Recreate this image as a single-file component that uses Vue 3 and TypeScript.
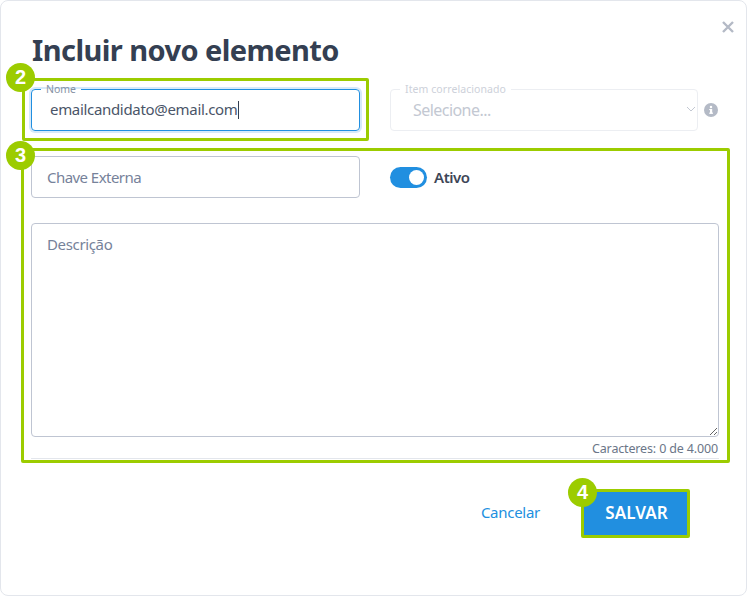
<script setup lang="ts">
const badges: { n: number; cls: string }[] = [
  { n: 2, cls: 'b2' },
  { n: 3, cls: 'b3' },
  { n: 4, cls: 'b4' },
]
const hl: string[] = ['h2', 'h3', 'h4']
</script>

<template>
  <div class="page">
    <div class="modal">
      <button class="close" aria-label="Fechar">
        <svg width="12" height="12" viewBox="0 0 12 12"><path d="M1 1l10 10M11 1L1 11" stroke="#b4bac6" stroke-width="2.4" fill="none" /></svg>
      </button>
      <h1 class="title">Incluir novo elemento</h1>

      <div class="row row1">
        <fieldset class="field focus">
          <legend>Nome</legend>
          <span class="value">emailcandidato@email.com</span><span class="caret"></span>
        </fieldset>
        <div class="selwrap">
          <fieldset class="field disabled">
            <legend>Item correlacionado</legend>
            <span class="value">Selecione...</span>
            <svg class="chev" width="10" height="6" viewBox="0 0 10 6"><path d="M1 1l4 4 4-4" stroke="#c3c8d2" stroke-width="1" fill="none" /></svg>
          </fieldset>
          <svg class="info" width="14" height="14" viewBox="0 0 14 14">
            <circle cx="7" cy="7" r="7" fill="#b4bac6" />
            <rect x="6" y="6" width="2.2" height="4.6" fill="#fff" />
            <rect x="5.2" y="9.6" width="3.8" height="1.2" fill="#fff" />
            <rect x="5.2" y="6" width="2" height="1.1" fill="#fff" />
            <circle cx="7" cy="4" r="1.25" fill="#fff" />
          </svg>
        </div>
      </div>

      <div class="row row2">
        <input class="plain" type="text" placeholder="Chave Externa" />
        <div class="toggle-row">
          <span class="toggle"><span class="knob"></span></span>
          <span class="toggle-label">Ativo</span>
        </div>
      </div>

      <textarea class="desc" placeholder="Descrição"></textarea>
      <div class="counter">Caracteres: 0 de 4.000</div>

      <div class="actions">
        <a class="cancel">Cancelar</a>
        <button class="save">SALVAR</button>
      </div>
    </div>

    <div v-for="h in hl" :key="h" class="hl" :class="h"></div>
    <div v-for="b in badges" :key="b.n" class="badge" :class="b.cls">{{ b.n }}</div>
  </div>
</template>

<style>
html, body { margin: 0; background: #fff; }
</style>

<style scoped>
.page {
  position: relative;
  width: 748px;
  height: 598px;
  overflow: hidden;
  font-family: "Noto Sans", "Open Sans", sans-serif;
  box-sizing: border-box;
}
.modal {
  position: relative;
  box-sizing: border-box;
  width: 747px;
  height: 596px;
  border: 1px solid #e3e6ec;
  border-radius: 8px;
  padding: 32px 28px 0 30px;
  background: #fff;
}
.close {
  position: absolute;
  top: 20px;
  right: 12px;
  padding: 0;
  border: 0;
  background: none;
  line-height: 0;
}
.title {
  margin: 0 0 0 1px;
  font-size: 29px;
  line-height: 34px;
  font-weight: 700;
  color: #343f52;
  letter-spacing: -0.57px;
}
.row { display: flex; }
.row1 { margin-top: 22px; height: 42px; }
.row2 { margin-top: 25px; height: 42px; }
.field {
  margin: 0;
  box-sizing: border-box;
  border: 1px solid;
  border-radius: 4px;
  height: 48px;
  margin-top: -6px;
  padding: 0 15px 0 18px;
  min-width: 0;
  position: relative;
  display: block;
}
.field legend {
  padding: 0 5px;
  margin-left: -9px;
  font-size: 10.5px;
  line-height: 12px;
  height: 12px;
  letter-spacing: -0.08px;
}
.focus {
  width: 329px;
  border-color: #218fe0;
  box-shadow: 0 0 0 2px #d6e9f9;
}
.focus legend { color: #8792a4; }
.value {
  font-size: 15px;
  line-height: 28px;
  letter-spacing: -0.32px;
}
.focus .value { color: #4a5568; }
.caret {
  display: inline-block;
  width: 1px;
  height: 18px;
  background: #343f52;
  vertical-align: -4px;
}
.selwrap {
  display: flex;
  align-items: center;
  margin-left: 30px;
}
.disabled {
  width: 308px;
  border-color: #eceef2;
  padding-left: 22px;
}
.disabled legend { color: #cdd1da; margin-left: -13px; letter-spacing: 0.08px; }
.disabled .value { color: #c3c8d2; font-size: 16px; letter-spacing: -0.55px; position: relative; top: 1px; }
.chev { position: absolute; right: 1px; top: 11px; }
.info { margin-left: 6px; }
.plain {
  box-sizing: border-box;
  width: 329px;
  height: 42px;
  border: 1px solid #bfc5d2;
  border-radius: 4px;
  padding: 0 15px;
  font: inherit;
  font-size: 15px;
  letter-spacing: -0.55px;
  outline: none;
}
.plain::placeholder, .desc::placeholder { color: #76829a; opacity: 1; }
.toggle-row {
  display: flex;
  align-items: center;
  margin-left: 30px;
  height: 42px;
}
.toggle {
  width: 37px;
  height: 21px;
  border-radius: 11px;
  background: #218fe0;
  position: relative;
  display: block;
}
.knob {
  position: absolute;
  right: 3px;
  top: 3px;
  width: 15px;
  height: 15px;
  border-radius: 50%;
  background: #fff;
}
.toggle-label {
  margin-left: 7px;
  font-size: 15px;
  font-weight: 600;
  color: #3d4657;
  letter-spacing: -0.45px;
}
.desc {
  display: block;
  box-sizing: border-box;
  margin-top: 25px;
  width: 688px;
  height: 214px;
  border: 1px solid #bfc5d2;
  border-radius: 4px;
  padding: 10px 15px;
  font: inherit;
  font-size: 15px;
  letter-spacing: -0.35px;
  outline: none;
}
.counter {
  box-sizing: border-box;
  width: 688px;
  height: 22px;
  padding-top: 3px;
  padding-right: 1px;
  border-bottom: 1px solid #e3e6ec;
  text-align: right;
  font-size: 12.5px;
  line-height: 17px;
  color: #6b7688;
  letter-spacing: -0.15px;
}
.actions {
  display: flex;
  align-items: center;
  justify-content: flex-end;
  width: 658px;
  margin-top: 31px;
}
.cancel {
  font-size: 15px;
  color: #218fe0;
  letter-spacing: -0.28px;
  margin-right: 44px;
  position: relative;
  top: -1px;
}
.save {
  width: 105px;
  height: 45px;
  border: 0;
  background: #218fe0;
  color: #fff;
  font: inherit;
  font-size: 17px;
  font-weight: 600;
  letter-spacing: 0.05px;
}
.hl {
  position: absolute;
  box-sizing: border-box;
  border: 3px solid #9ccc00;
  border-radius: 2px;
  pointer-events: none;
}
.h2 { left: 22px; top: 78px; width: 347px; height: 63px; }
.h3 { left: 21px; top: 148px; width: 709px; height: 315px; }
.h4 { left: 581px; top: 489px; width: 109px; height: 49px; }
.badge {
  position: absolute;
  width: 29px;
  height: 29px;
  border-radius: 50%;
  background: #9ccc00;
  color: #fff;
  font-family: "Liberation Sans", sans-serif;
  font-weight: 700;
  font-size: 20px;
  line-height: 29px;
  text-align: center;
}
.b2 { left: 6px; top: 63px; }
.b3 { left: 6px; top: 141px; }
.b4 { left: 568px; top: 478px; }
</style>
